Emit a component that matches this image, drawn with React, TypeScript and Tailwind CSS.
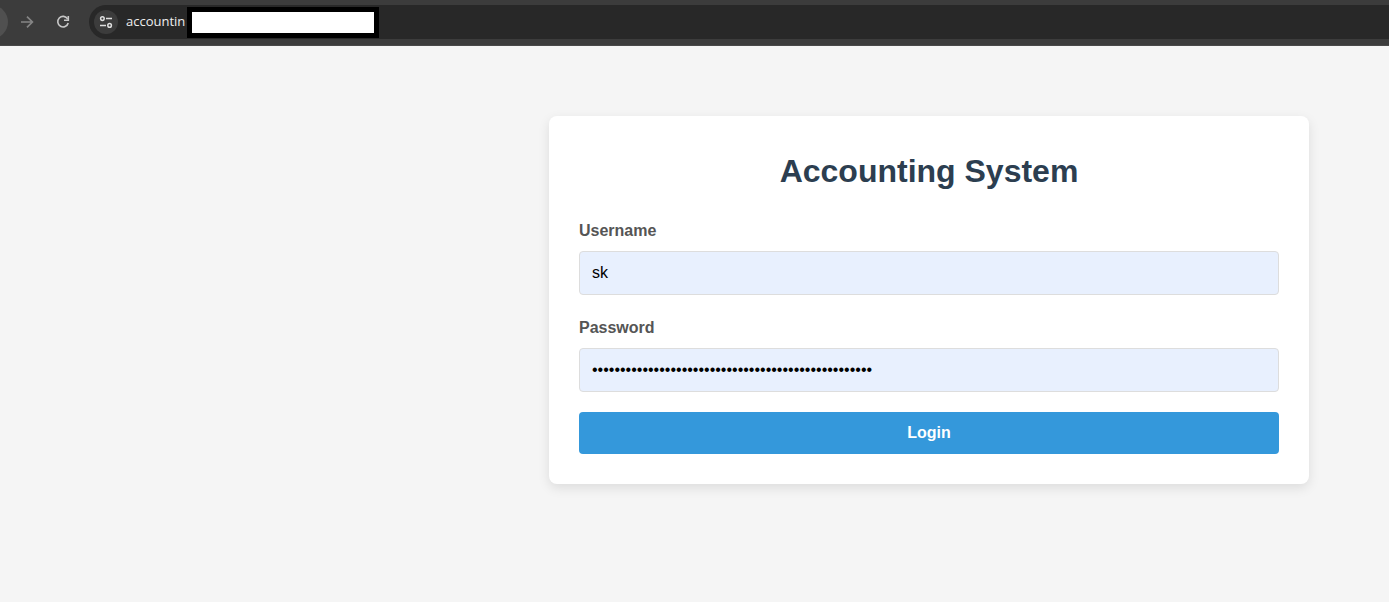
import { useState } from "react";

function BrowserBar() {
  const [address, setAddress] = useState("accountin");

  return (
    <header className="flex h-[46px] items-start overflow-hidden border-b border-[#494949] bg-[#3c3c3c] pt-[5px]">
      <nav className="-ml-[26px] flex shrink-0 gap-0.5" aria-label="Browser navigation">
        <button type="button" aria-label="Back" className="size-[34px] rounded-full bg-[#505050]" />
        <button type="button" aria-label="Forward" className="flex size-[34px] items-center justify-center text-[#858585]">
          <svg width="16" height="16" viewBox="0 0 16 16" fill="none" stroke="currentColor" strokeWidth="1.7">
            <path d="M2 8H13.2M8 2.6L13.4 8L8 13.4" />
          </svg>
        </button>
        <button type="button" aria-label="Reload" className="flex size-[34px] items-center justify-center text-[#c7c7c7]">
          <svg width="16" height="16" viewBox="0 0 16 16" fill="none" stroke="currentColor" strokeWidth="1.6">
            <path d="M12.6 4.9A5.3 5.3 0 1 0 13.2 9" />
            <path d="M13.3 2V6.3H9" />
          </svg>
        </button>
      </nav>
      <div className="ml-[9px] flex h-[34px] grow items-center rounded-l-full bg-[#282828] pl-[5px]">
        <button
          type="button"
          aria-label="View site information"
          className="flex size-6 shrink-0 items-center justify-center rounded-full bg-[#3c3c3c] text-[#dedede]"
        >
          <svg width="14" height="14" viewBox="0 0 14 14" fill="none" stroke="currentColor" strokeWidth="1.5">
            <circle cx="3.4" cy="3.6" r="1.8" />
            <path d="M7 3.6H13M1 10.4H7" />
            <circle cx="10.6" cy="10.4" r="1.8" />
          </svg>
        </button>
        <input
          aria-label="Address"
          value={address}
          onChange={(e) => setAddress(e.target.value)}
          className="ml-2 w-[61px] bg-transparent font-['Open_Sans',sans-serif] text-[13px] text-[#eeeeee] outline-none"
        />
        <div className="h-[31px] w-48 border-5 border-black bg-white" />
      </div>
    </header>
  );
}

type FieldProps = {
  id: string;
  label: string;
  type: "text" | "password";
  initial: string;
};

function Field({ id, label, type, initial }: FieldProps) {
  const [value, setValue] = useState(initial);

  return (
    <div className="mb-5">
      <label htmlFor={id} className="mb-2 block leading-[25px] font-bold text-[#555555]">
        {label}
      </label>
      <input
        id={id}
        type={type}
        value={value}
        autoComplete="off"
        onChange={(e) => setValue(e.target.value)}
        className="block h-11 w-full rounded border border-[#dddddd] bg-[#e8f0fe] px-3 text-black"
      />
    </div>
  );
}

export default function App() {
  return (
    <div className="min-h-screen bg-[#f5f5f5] font-['Liberation_Sans',Arial,sans-serif] text-base">
      <BrowserBar />
      <main className="flex justify-end px-20 py-[70px]">
        <form
          onSubmit={(e) => e.preventDefault()}
          className="w-full max-w-[760px] rounded-lg bg-white p-[30px] shadow-[0_4px_12px_rgba(0,0,0,0.1)]"
        >
          <h1 className="mb-[22px] text-center text-[32px] leading-[50px] font-bold text-[#2c3e50]">Accounting System</h1>
          <Field id="username" label="Username" type="text" initial="sk" />
          <Field id="password" label="Password" type="password" initial={"x".repeat(50)} />
          <button type="submit" className="block h-[42px] w-full rounded bg-[#3498db] font-bold text-white">
            Login
          </button>
        </form>
      </main>
    </div>
  );
}
